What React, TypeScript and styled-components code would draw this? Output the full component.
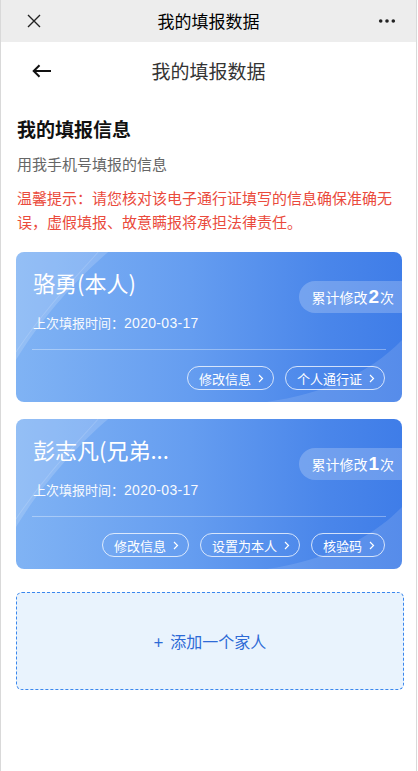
import React from "react";
import styled, { createGlobalStyle } from "styled-components";

const Global = createGlobalStyle`
  html, body { margin: 0; padding: 0; background: #fff; }
  body { font-family: "Noto Sans CJK SC", "Noto Sans", "Liberation Sans", sans-serif; }
  * { box-sizing: border-box; }
`;

const Frame = styled.div`
  width: 417px;
  min-height: 771px;
  border-left: 1px solid #d9d9d9;
  border-right: 1px solid #d9d9d9;
  background: #fff;
`;

const TopBar = styled.div`
  height: 42px;
  background: #ededed;
  display: flex;
  align-items: center;
  justify-content: space-between;
  padding: 0 20px 0 24px;
  position: relative;
`;

const TopTitle = styled.div`
  position: absolute;
  left: 0;
  right: 0;
  text-align: center;
  font-size: 17px;
  font-weight: 400;
  color: #000;
  pointer-events: none;
  line-height: 42px;
`;

const IconBtn = styled.div`
  display: flex;
  align-items: center;
  justify-content: center;
  width: 18px;
  height: 18px;
`;

const NavBar = styled.div`
  height: 58px;
  display: flex;
  align-items: center;
  padding: 0 0 0 31px;
  position: relative;
`;

const NavTitle = styled.div`
  position: absolute;
  left: 0;
  right: 0;
  text-align: center;
  font-size: 19px;
  color: #333;
  line-height: 58px;
  pointer-events: none;
`;

const Content = styled.div`
  padding: 17px 14px 0 15px;
`;

const Heading = styled.h1`
  margin: 0 0 0 1px;
  font-size: 19px;
  font-weight: 700;
  color: #111;
  line-height: 24px;
`;

const Sub = styled.p`
  margin: 12px 0 0 1px;
  font-size: 15px;
  color: #666;
  line-height: 22px;
`;

const Warn = styled.p`
  margin: 11px 0 0 1px;
  font-size: 15px;
  color: #ea4a3c;
  line-height: 24px;
`;

const Card = styled.div<{ $top: number }>`
  position: relative;
  overflow: hidden;
  margin-top: ${(p) => p.$top}px;
  border-radius: 8px;
  background: linear-gradient(90deg, #80b3f4 0%, #659df0 45%, #4a86ea 80%, #3f7de8 100%);
  color: #fff;
  padding: 15px 0 12px 0;
`;

const Deco = styled.svg`
  position: absolute;
  inset: 0;
  width: 100%;
  height: 100%;
  pointer-events: none;
`;

const TopRow = styled.div`
  position: relative;
  display: flex;
  justify-content: space-between;
  align-items: flex-start;
  padding-left: 17px;
`;

const Name = styled.div`
  font-size: 22px;
  line-height: 30px;
  white-space: nowrap;
`;

const DateLine = styled.div`
  margin-top: 16px;
  font-size: 13px;
  line-height: 20px;
  opacity: 0.95;
`;

const DateNum = styled.span`
  font-family: "Liberation Sans", "Noto Sans", sans-serif;
  font-size: 14px;
  letter-spacing: 0.3px;
`;

const Pill = styled.div`
  margin-top: 14px;
  height: 32px;
  display: flex;
  align-items: center;
  padding: 0 8px 0 12px;
  border-radius: 16px 0 0 16px;
  background: rgba(255, 255, 255, 0.22);
  font-size: 14px;
  white-space: nowrap;
`;

const Count = styled.span`
  font-size: 19px;
  font-weight: 700;
  margin: 0 1px;
  font-family: "Liberation Sans", "Noto Sans", sans-serif;
`;

const Divider = styled.div`
  position: relative;
  margin: 16px 16px 0 16px;
  height: 1px;
  background: rgba(255, 255, 255, 0.35);
`;

const Actions = styled.div`
  position: relative;
  display: flex;
  justify-content: flex-end;
  gap: 11px;
  margin-top: 16px;
  padding: 0 17px;
`;

const ActionBtn = styled.div`
  height: 24px;
  display: flex;
  align-items: center;
  gap: 7px;
  padding: 0 9px 0 11px;
  border: 1px solid rgba(255, 255, 255, 0.75);
  border-radius: 12px;
  font-size: 13px;
  line-height: 1;
  white-space: nowrap;
`;

const AddBox = styled.div`
  margin: 23px -2px 0 0;
  height: 98px;
  border: 1px dashed #3a87ee;
  border-radius: 6px;
  background: #e9f3fd;
  display: flex;
  align-items: center;
  justify-content: center;
  color: #2d6ad6;
  font-size: 16px;
  gap: 7px;
`;

const Plus = styled.span`
  font-size: 17px;
`;

const Chevron = () => (
  <svg width="6" height="9" viewBox="0 0 6 9" fill="none">
    <path d="M1 1l3.5 3.5L1 8" stroke="#fff" strokeWidth="1.2" />
  </svg>
);

const CardDeco = () => (
  <Deco viewBox="0 0 385 150" preserveAspectRatio="none">
    <path d="M0 0 H92 C66 22 28 62 0 108 Z" fill="#fff" opacity="0.16" />
    <path d="M0 100 C30 55 60 25 82 0" stroke="#fff" strokeOpacity="0.14" fill="none" />
    <path d="M385 88 C352 122 305 142 250 150 H385 Z" fill="#fff" opacity="0.12" />
  </Deco>
);

type Person = {
  name: string;
  count: number;
  date: string;
  actions: string[];
  top: number;
};

const people: Person[] = [
  { name: "骆勇(本人)", count: 2, date: "2020-03-17", actions: ["修改信息", "个人通行证"], top: 18 },
  { name: "彭志凡(兄弟...", count: 1, date: "2020-03-17", actions: ["修改信息", "设置为本人", "核验码"], top: 17 },
];

export default function App() {
  return (
    <Frame>
      <Global />
      <TopBar>
        <IconBtn>
          <svg width="14" height="14" viewBox="0 0 14 14">
            <path d="M1 1L13 13M13 1L1 13" stroke="#222" strokeWidth="1.4" />
          </svg>
        </IconBtn>
        <TopTitle>我的填报数据</TopTitle>
        <IconBtn>
          <svg width="20" height="6" viewBox="0 0 20 6">
            <circle cx="3" cy="3" r="2" fill="#222" />
            <circle cx="10" cy="3" r="2" fill="#222" />
            <circle cx="17" cy="3" r="2" fill="#222" />
          </svg>
        </IconBtn>
      </TopBar>
      <NavBar>
        <svg width="20" height="14" viewBox="0 0 20 14" fill="none">
          <path d="M19 7H2M7.5 1.2L1.7 7l5.8 5.8" stroke="#111" strokeWidth="2" />
        </svg>
        <NavTitle>我的填报数据</NavTitle>
      </NavBar>
      <Content>
        <Heading>我的填报信息</Heading>
        <Sub>用我手机号填报的信息</Sub>
        <Warn>温馨提示：请您核对该电子通行证填写的信息确保准确无误，虚假填报、故意瞒报将承担法律责任。</Warn>
        {people.map((p, i) => (
          <Card key={i} $top={p.top}>
            <CardDeco />
            <TopRow>
              <div>
                <Name>{p.name}</Name>
                <DateLine>
                  上次填报时间：<DateNum>{p.date}</DateNum>
                </DateLine>
              </div>
              <Pill>
                累计修改<Count>{p.count}</Count>次
              </Pill>
            </TopRow>
            <Divider />
            <Actions>
              {p.actions.map((a) => (
                <ActionBtn key={a}>
                  {a}
                  <Chevron />
                </ActionBtn>
              ))}
            </Actions>
          </Card>
        ))}
        <AddBox>
          <Plus>+</Plus>添加一个家人
        </AddBox>
      </Content>
    </Frame>
  );
}
